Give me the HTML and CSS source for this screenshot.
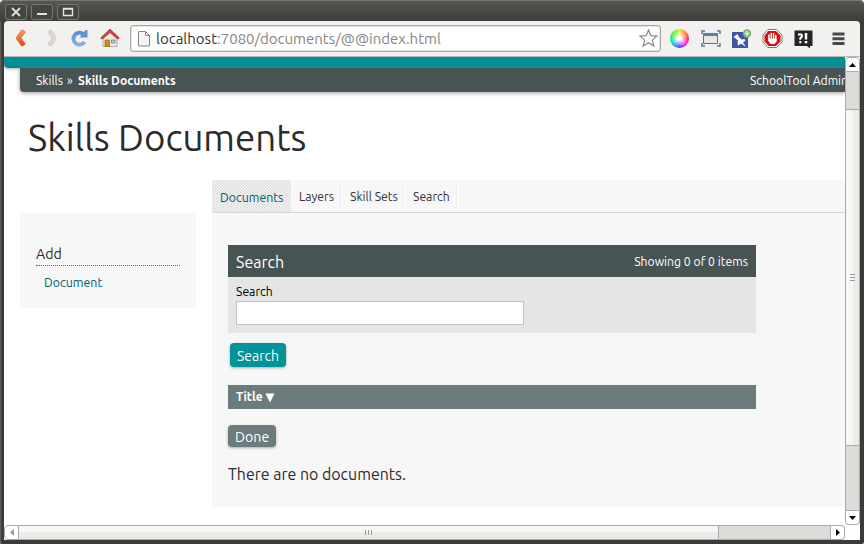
FILE: index.html
```html
<!DOCTYPE html>
<html lang="en">
<head>
<meta charset="utf-8">
<title>Skills Documents</title>
<link rel="stylesheet" href="styles.css">
</head>
<body>
<div class="window">
  <header class="titlebar">
    <span class="winbtn"><svg width="22" height="16"><path d="M7 4l8 8M15 4l-8 8" stroke="#e4e2dc" stroke-width="1.8"/></svg></span>
    <span class="winbtn"><svg width="22" height="16"><path d="M6 10h10" stroke="#e4e2dc" stroke-width="2"/></svg></span>
    <span class="winbtn"><svg width="22" height="16"><path d="M6.500 4.500h9v7h-9zM6 5h10" fill="none" stroke="#e4e2dc" stroke-width="1.400"/></svg></span>
  </header>
  <nav class="toolbar">
    <svg class="navs" width="126" height="35" viewBox="4 21 126 35">
      <defs>
        <linearGradient id="or" x2="0" y2="1"><stop stop-color="#f6a35a"/><stop offset="1" stop-color="#db4813"/></linearGradient>
        <linearGradient id="bl" x2="0" y2="1"><stop stop-color="#5d92cf"/><stop offset="1" stop-color="#83b2e2"/></linearGradient>
      </defs>
      <path d="M23 30l2.500 2-4.500 6 4.500 6-2.500 2h-1.500l-5-7v-2l5-7z" fill="url(#or)" stroke="#d56a32" stroke-width=".6"/>
      <path d="M50 30l-2.500 2 4.500 6-4.500 6 2.500 2h1.500l4.500-7v-2l-4.500-7z" fill="#d9d6d4" stroke="#c9c5c3" stroke-width=".5"/>
      <path d="M83.500 34.200A6 6 0 1 0 84.500 42" fill="none" stroke="url(#bl)" stroke-width="4"/>
      <path d="M79.500 37.500h8v-7.500h-2z" fill="#5f96d3"/>
      <path d="M103 38l7-6 7 6v8.500h-14z" fill="#ece9df" stroke="#9c9a90" stroke-width=".7"/>
      <path d="M105 40h4.500v6.500H105z" fill="#d28b19" stroke="#9d6918" stroke-width=".7"/>
      <path d="M111.500 40h3.500v3h-3.500z" fill="#b7cdda" stroke="#777" stroke-width=".7"/>
      <path d="M101 37.500l9-8.500 9 8.500v1.200h-2l-7-6.200-7 6.200h-2z" fill="#ce3f42" stroke="#a73237" stroke-width=".6"/>
    </svg>
    <div class="address">
      <svg width="12" height="16"><path d="M.5.500h7l4 4v10.500h-11zM7.500.500v4h4" fill="#f5f5f5" stroke="#888"/></svg>
      <span class="url">localhost<i>:7080/documents/@@index.html</i></span>
      <svg class="star" width="19" height="19"><path d="M9.500 1l2.300 5.700 6.200.4-4.700 4 1.600 6-5.400-3.400-5.400 3.400 1.600-6L1 7.100l6.200-.4z" fill="#fff" stroke="#888" stroke-width="1.200"/></svg>
    </div>
    <div class="extensions">
      <span class="wheel"></span>
      <svg class="exts" width="165" height="35" viewBox="695 21 165 35">
        <path d="M702 34v-3h3M717 31h3v3M720 43v3h-3M705 46h-3v-3" fill="none" stroke="#527d9c" stroke-width="1.500"/>
        <path d="M703.500 33.500h14v10h-14z" fill="#e8e8e4" stroke="#467899"/><path d="M703 33h15v3h-15z" fill="#5484a8"/>
        <path d="M732 32h16v16h-16z" fill="#4155a7"/>
        <path d="M733 37.500l4.500-3.500 1 2.500 3 3 3-.5 1 1.500-2.500 2 3 4.500-5-3.500-2.500 2-1-1.500.5-3.500-3.500-3z" fill="#fff"/>
        <circle cx="747" cy="33.500" r="4.200" fill="#77b967"/><path d="M744.500 33.500h5M747 31v5" stroke="#e1f2dd" stroke-width="1.600"/>
        <path d="M768 29.500h8.500l5.500 5.500v7l-5.500 5.500H768l-5-5.500v-7z" fill="#fff" stroke="#787878"/>
        <path d="M768.500 31h7.500l4.500 4.500v6L776 46h-7.500l-4-4.500v-6z" fill="#d60f12"/>
        <path d="M769 35v5M771.300 33.500v6M773.600 33.500v6M775.800 35.500v5" stroke="#fff" stroke-width="1.500" stroke-linecap="round"/>
        <path d="M768.300 38.500h8.300v3l-2 2.500h-4l-2.300-3z" fill="#fff"/>
        <path d="M794.500 30.500h18V46H810v2.500l-3-2.500h-12.500z" fill="#262626"/>
        <path d="M798 34.500h3.500q1.500 2-1.200 3.700v1.500M800.300 41v2.200" fill="none" stroke="#fff" stroke-width="2"/>
        <path d="M806 33v6.500M806 41v2.200" stroke="#fff" stroke-width="2.500"/>
        <path d="M832.500 34h12M832.500 38.800h12M832.500 43.600h12" stroke="#494949" stroke-width="3"/>
      </svg>
    </div>
  </nav>
  <div class="content">
    <main class="page">
      <div class="teal"></div>
      <div class="crumbs"><span class="c1">Skills</span><span class="sep">»</span><b>Skills Documents</b><span class="user">SchoolTool Admin</span></div>
      <h1><span>Skills Documents</span></h1>
      <div class="columns">
        <aside>
          <h2>Add</h2>
          <a>Document</a>
        </aside>
        <section class="main">
          <nav class="tabs">
            <a class="t1 active">Documents</a><a class="t2">Layers</a><a class="t3">Skill Sets</a><a class="t4">Search</a>
          </nav>
          <div class="body">
            <div class="panelhead"><h3>Search</h3><span class="showing">Showing 0 of 0 items</span></div>
            <div class="field"><label>Search</label><div class="input"></div></div>
            <div class="button search">Search</div>
            <div class="tablehead"><b>Title</b><svg width="10" height="10"><path d="M.5.500h9l-4.500 9z" fill="#fff"/></svg></div>
            <div class="button done">Done</div>
            <p>There are no documents.</p>
          </div>
        </section>
      </div>
    </main>
    <div class="vscroll">
      <span class="sbtn up"><svg width="7" height="4"><path d="M3.500 0L7 4H0z"/></svg></span>
      <span class="vtrack a"></span>
      <span class="vthumb"><svg width="5" height="8"><path d="M0 .5h5M0 3.500h5M0 6.500h5" stroke="#999"/></svg></span>
      <span class="vtrack b"></span>
      <span class="sbtn down"><svg width="7" height="4"><path d="M0 0h7L3.500 4z"/></svg></span>
    </div>
    <div class="hscroll">
      <span class="sbtn left"><svg width="4" height="7"><path d="M4 0v7L0 3.500z" fill="#999"/></svg></span>
      <span class="hthumb"><svg width="8" height="5"><path d="M.5 0v5M3.500 0v5M6.500 0v5" stroke="#999"/></svg></span>
      <span class="htrack"></span>
      <span class="sbtn right"><svg width="4" height="7"><path d="M0 0v7l4-3.500z"/></svg></span>
    </div>
  </div>
</div>
</body>
</html>
```
FILE: styles.css
```css
* { box-sizing: border-box; }
body { margin: 0; background: #fff; font-family: Ubuntu, "Noto Sans", sans-serif; color: #2b2b2b; overflow: hidden; }
svg { display: block; flex: none; }
h1, h2, h3, p { margin: 0; font-weight: 400; }
.window { width: 864px; height: 544px; padding: 0 4px 4px; background: #3c3b37; border-radius: 5px 5px 2px 2px; box-shadow: inset 1px 1px #5a5954, inset 2px 2px #494843; }
.titlebar { height: 21px; margin: 0 -4px; padding: 3px 5px 0; display: flex; gap: 4px; background: linear-gradient(#575650, #3d3c38); border-radius: 5px 5px 0 0; border-top: 1px solid #77756f; }
.winbtn { width: 22px; height: 16px; border-radius: 3px; background: #45443f; box-shadow: inset 0 0 0 1px #77766f; }
.toolbar { height: 36px; display: flex; background: #f2f1f0; border-radius: 4px 4px 0 0; border-bottom: 1px solid #bab8b6; }
.navs { width: 126px; height: 35px; }
.address { width: 531px; height: 27px; margin-top: 4px; background: #fff; border: 1px solid #aaa7a3; border-radius: 3px; display: flex; align-items: center; padding: 0 2px 0 7px; box-shadow: inset 0 0 0 .5px #ccc; }
.url { margin-left: 6px; font-size: 15px; line-height: 24px; white-space: nowrap; color: #333; }
.url i { font-style: normal; color: #858585; }
.star { margin-left: auto; }
.extensions { display: flex; }
.wheel { width: 19px; height: 19px; margin: 8px 6px 0 9px; border-radius: 50%; background: radial-gradient(circle closest-side, #fff 0 15%, transparent 90%), conic-gradient(#e6e821, #ff8b24, #ff286e, #f02ce8, #5340ff, #1fb8fc, #17f274, #5fe92a, #e6e821); }
.content { display: grid; grid-template: 468px 15px / 841px 15px; background: #fff; }
.page { overflow: hidden; }
.teal { height: 11px; background: linear-gradient(#009095 70%, #078286); border-radius: 0 0 0 4px; box-shadow: 0 1px 3px #aaa; }
.crumbs { height: 24px; margin-left: 16px; background: #485454; color: #fff; display: flex; align-items: center; padding: 0 0 0 16px; font-size: 12.15px; border-radius: 0 0 0 4px; box-shadow: 0 1px 4px #999; position: relative; white-space: nowrap; }
.c1 { width: 31px; }
.sep { width: 11px; }
.user { margin-left: auto; width: 95px; }
h1 { font-size: 36.65px; line-height: 50px; padding: 21px 24px 0; height: 88px; white-space: nowrap; }
.columns { display: flex; align-items: flex-start; gap: 16px; padding-left: 16px; }
aside { flex: none; width: 176px; height: 95px; margin-top: 33px; background: #f7f7f7; padding: 30px 16px; border-radius: 2px; }
h2 { height: 23px; font-size: 14.2px; line-height: 22px; border-bottom: 1px dotted #009499; }
aside a { display: block; margin: 7px 0 0 8px; font-size: 12.4px; line-height: 18px; color: #006065; }
.main { width: 640px; height: 327px; background: #f7f7f7; border-radius: 4px; overflow: hidden; flex: none; }
.tabs { height: 33px; border-bottom: 1px solid #d6d6d6; display: flex; }
.tabs a { padding: 1px 0 0 8px; font-size: 12.2px; line-height: 32px; height: 32px; border-right: 1px solid #fff; box-shadow: inset -1px 0 #eee; white-space: nowrap; color: #333; }
.tabs a.active { color: #006065; background: repeating-linear-gradient(45deg, #e1e1e1 0 .8px, #f7f7f7 .8px 2.12px); border: 0; box-shadow: none; font-size: 12.35px; }
.t1 { width: 79px; }
.t2 { width: 51px; }
.t3 { width: 63px; }
.t4 { width: 53px; }
.body { width: 560px; padding: 32px 16px 0; }
.panelhead { height: 32px; display: flex; align-items: center; justify-content: space-between; background: #485454; color: #fff; padding: 0 8px; }
h3 { font-size: 16px; padding-top: 2px; }
.showing { font-size: 12.2px; }
.field { height: 56px; background: #e5e5e5; padding: 6px 8px 0; color: #000; }
label { display: block; font-size: 12.2px; line-height: 18px; height: 18px; }
.input { width: 288px; height: 24px; background: #fff; border: 1px solid #c9bdc0; }
.button { color: #fff; font-size: 14px; border-radius: 4px; box-shadow: 0 1px 3px #aaa; padding-left: 7px; white-space: nowrap; }
.search { width: 56px; height: 24px; line-height: 27px; margin: 10px 0 18px 2px; background: #009499; }
.tablehead { height: 24px; background: #6c7c7c; color: #fff; display: flex; align-items: center; padding: 0 8px; font-size: 12px; }
.tablehead b { width: 29px; padding-bottom: 2px; }
.tablehead svg { margin-top: 2px; }
.done { width: 48px; height: 22px; line-height: 25px; margin: 16px 0 15px; background: #6c7c7c; font-size: 14.2px; }
p { font-size: 15.95px; line-height: 24px; white-space: nowrap; }
.vscroll { height: 468px; display: flex; flex-direction: column; }
.vscroll > span { border: 1px solid #aaa; border-top-width: 0; width: 15px; display: flex; align-items: center; justify-content: center; }
.vscroll > .up { height: 15px; border-top-width: 1px; border-radius: 4px 4px 0 0; }
.vtrack.a { height: 38px; }
.vtrack { background: #dcdbda; }
.vthumb { height: 336px; background: linear-gradient(90deg, #f7f6f5 50%, #ecebea 50%); }
.vtrack.b { height: 65px; }
.vscroll > .down { height: 14px; border-radius: 0 0 4px 4px; }
.hscroll { display: flex; height: 15px; }
.hscroll > span { border: 1px solid #aaa; border-left-width: 0; height: 15px; display: flex; align-items: center; justify-content: center; }
.hscroll > .left { width: 15px; border-left-width: 1px; border-radius: 4px 0 0 4px; }
.hthumb { width: 700px; background: linear-gradient(#f7f6f5 50%, #ecebea 50%); }
.htrack { width: 112px; background: #dcdbda; }
.hscroll > .right { width: 14px; border-radius: 0 4px 4px 0; }
```
